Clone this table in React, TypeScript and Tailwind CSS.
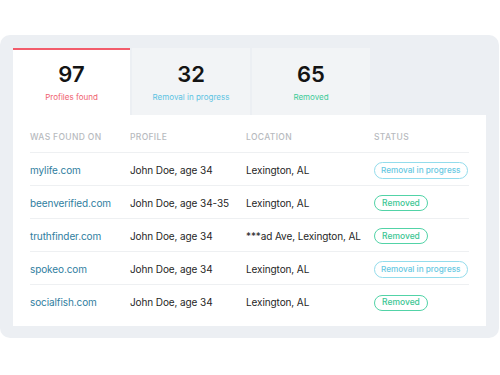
import React from "react";

const TABS = [
  { value: "97", label: "Profiles found", color: "text-[#f0626f]", active: true },
  { value: "32", label: "Removal in progress", color: "text-[#5cc3e2]", active: false },
  { value: "65", label: "Removed", color: "text-[#3ccb98]", active: false },
];

const ROWS = [
  { site: "mylife.com", profile: "John Doe, age 34", location: "Lexington, AL", done: false },
  { site: "beenverified.com", profile: "John Doe, age 34-35", location: "Lexington, AL", done: true },
  { site: "truthfinder.com", profile: "John Doe, age 34", location: "***ad Ave, Lexington, AL", done: true },
  { site: "spokeo.com", profile: "John Doe, age 34", location: "Lexington, AL", done: false },
  { site: "socialfish.com", profile: "John Doe, age 34", location: "Lexington, AL", done: true },
];

function Status({ done }: { done: boolean }) {
  if (done) {
    return (
      <span className="inline-flex h-[16px] items-center rounded-full border border-[#52d3a7] px-[7px] text-[8.5px] font-medium whitespace-nowrap text-[#3cc694]">
        Removed
      </span>
    );
  }
  return (
    <span className="inline-flex h-[17px] items-center rounded-full border border-[#93dcec] px-[6px] text-[8.2px] font-medium whitespace-nowrap text-[#67c8e2]">
      Removal in progress
    </span>
  );
}

export default function App() {
  return (
    <div className="h-[375px] w-[500px] bg-white pt-[35px] font-['Inter',sans-serif]">
      <div className="w-[499px] rounded-[10px] bg-[#eceff3] px-[13px] pt-[13px] pb-[12px]">
        <div className="flex gap-[2px]">
          {TABS.map((t) => (
            <div
              key={t.value}
              className={
                t.active
                  ? "flex h-[67px] w-[117px] flex-col items-center border-t-2 border-[#f25c6b] bg-white pt-[12px]"
                  : "flex h-[67px] w-[118px] flex-col items-center border-t-2 border-transparent bg-[#f2f4f6] pt-[12px]"
              }
            >
              <div className="text-[22px] leading-[24px] font-semibold text-[#141414]">{t.value}</div>
              <div className={"mt-[6px] text-[8px] leading-[10px] " + t.color}>{t.label}</div>
            </div>
          ))}
        </div>

        <div className="w-[473px] bg-white px-[17px] pt-[16px] pb-[8px]">
          <div className="grid grid-cols-[100px_116px_128px_1fr] border-b border-[#eef0f2] pb-[9px] text-[8.5px] leading-[12px] font-medium tracking-[0.04em] text-[#b7babe] uppercase">
            <div>Was found on</div>
            <div>Profile</div>
            <div>Location</div>
            <div>Status</div>
          </div>
          {ROWS.map((r, i) => (
            <div
              key={r.site}
              className={
                "grid h-[33px] grid-cols-[100px_116px_128px_1fr] items-center pt-[2px] text-[10px] tracking-[-0.01em] whitespace-nowrap text-[#1f1f1f] " +
                (i < ROWS.length - 1 ? "border-b border-[#eef0f2]" : "")
              }
            >
              <div className="text-[#2f7ea0]">{r.site}</div>
              <div>{r.profile}</div>
              <div>{r.location}</div>
              <div className="tracking-normal">
                <Status done={r.done} />
              </div>
            </div>
          ))}
        </div>
      </div>
    </div>
  );
}
